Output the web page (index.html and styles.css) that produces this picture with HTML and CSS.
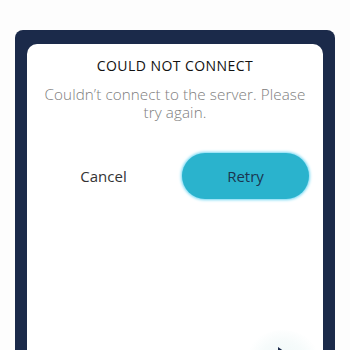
FILE: index.html
```html
<!DOCTYPE html>
<html>
<head>
<meta charset="utf-8">
<link rel="stylesheet" href="styles.css">
</head>
<body>
<div class="frame">
  <div class="card">
    <h1 class="title">COULD NOT CONNECT</h1>
    <p class="message">Couldn’t connect to the server. Please try again.</p>
    <div class="actions">
      <button class="btn cancel">Cancel</button>
      <button class="btn retry">Retry</button>
    </div>
    <div class="fab"><span class="fab-icon"></span></div>
  </div>
</div>
</body>
</html>
```
FILE: styles.css
```css
html, body {
  margin: 0;
  padding: 0;
  background: #fdfdfd;
  overflow: hidden;
  height: 350px;
}
.frame {
  margin: 30px 15px 0;
  background: #1b2a4a;
  border-radius: 8px 8px 0 0;
  padding: 14px 12px 0;
  height: 320px;
  box-sizing: border-box;
  overflow: hidden;
}
.card {
  position: relative;
  background: #ffffff;
  border-radius: 10px 10px 0 0;
  height: 306px;
  font-family: "Open Sans", sans-serif;
  text-align: center;
  padding-top: 13px;
  box-sizing: border-box;
  overflow: hidden;
}
.title {
  margin: 0;
  font-size: 14px;
  font-weight: 500;
  color: #111;
  line-height: 18px;
  letter-spacing: 0.45px;
}
.message {
  margin: 10px 10px 0;
  font-size: 15.2px;
  font-weight: 300;
  color: #7d7d7d;
  line-height: 18px;
  letter-spacing: 0.1px;
}
.actions {
  display: flex;
  align-items: center;
  margin-top: 32px;
  padding: 0 14px 0 22px;
}
.btn {
  font-family: "Open Sans", sans-serif;
  font-size: 15px;
  border: none;
  background: none;
  padding: 0;
}
.cancel {
  flex: 1;
  color: #333;
  text-align: center;
  margin-right: 24px;
}
.retry {
  width: 127px;
  height: 46px;
  border-radius: 23px;
  background: #2ab3cd;
  color: #1b3550;
  box-shadow: 0 0 3px 1px #6fd6f2;
}
.fab {
  position: absolute;
  right: 0;
  bottom: -50px;
  width: 80px;
  height: 70px;
  border-radius: 50%;
  background: radial-gradient(circle, #eef8f8 0%, #f6fbfb 45%, rgba(255,255,255,0) 70%);
}
.fab-icon {
  position: absolute;
  left: 35px;
  top: 17px;
  width: 0;
  height: 0;
  border-left: 7px solid #1b2a4a;
  border-top: 5px solid transparent;
  border-bottom: 5px solid transparent;
}
```
